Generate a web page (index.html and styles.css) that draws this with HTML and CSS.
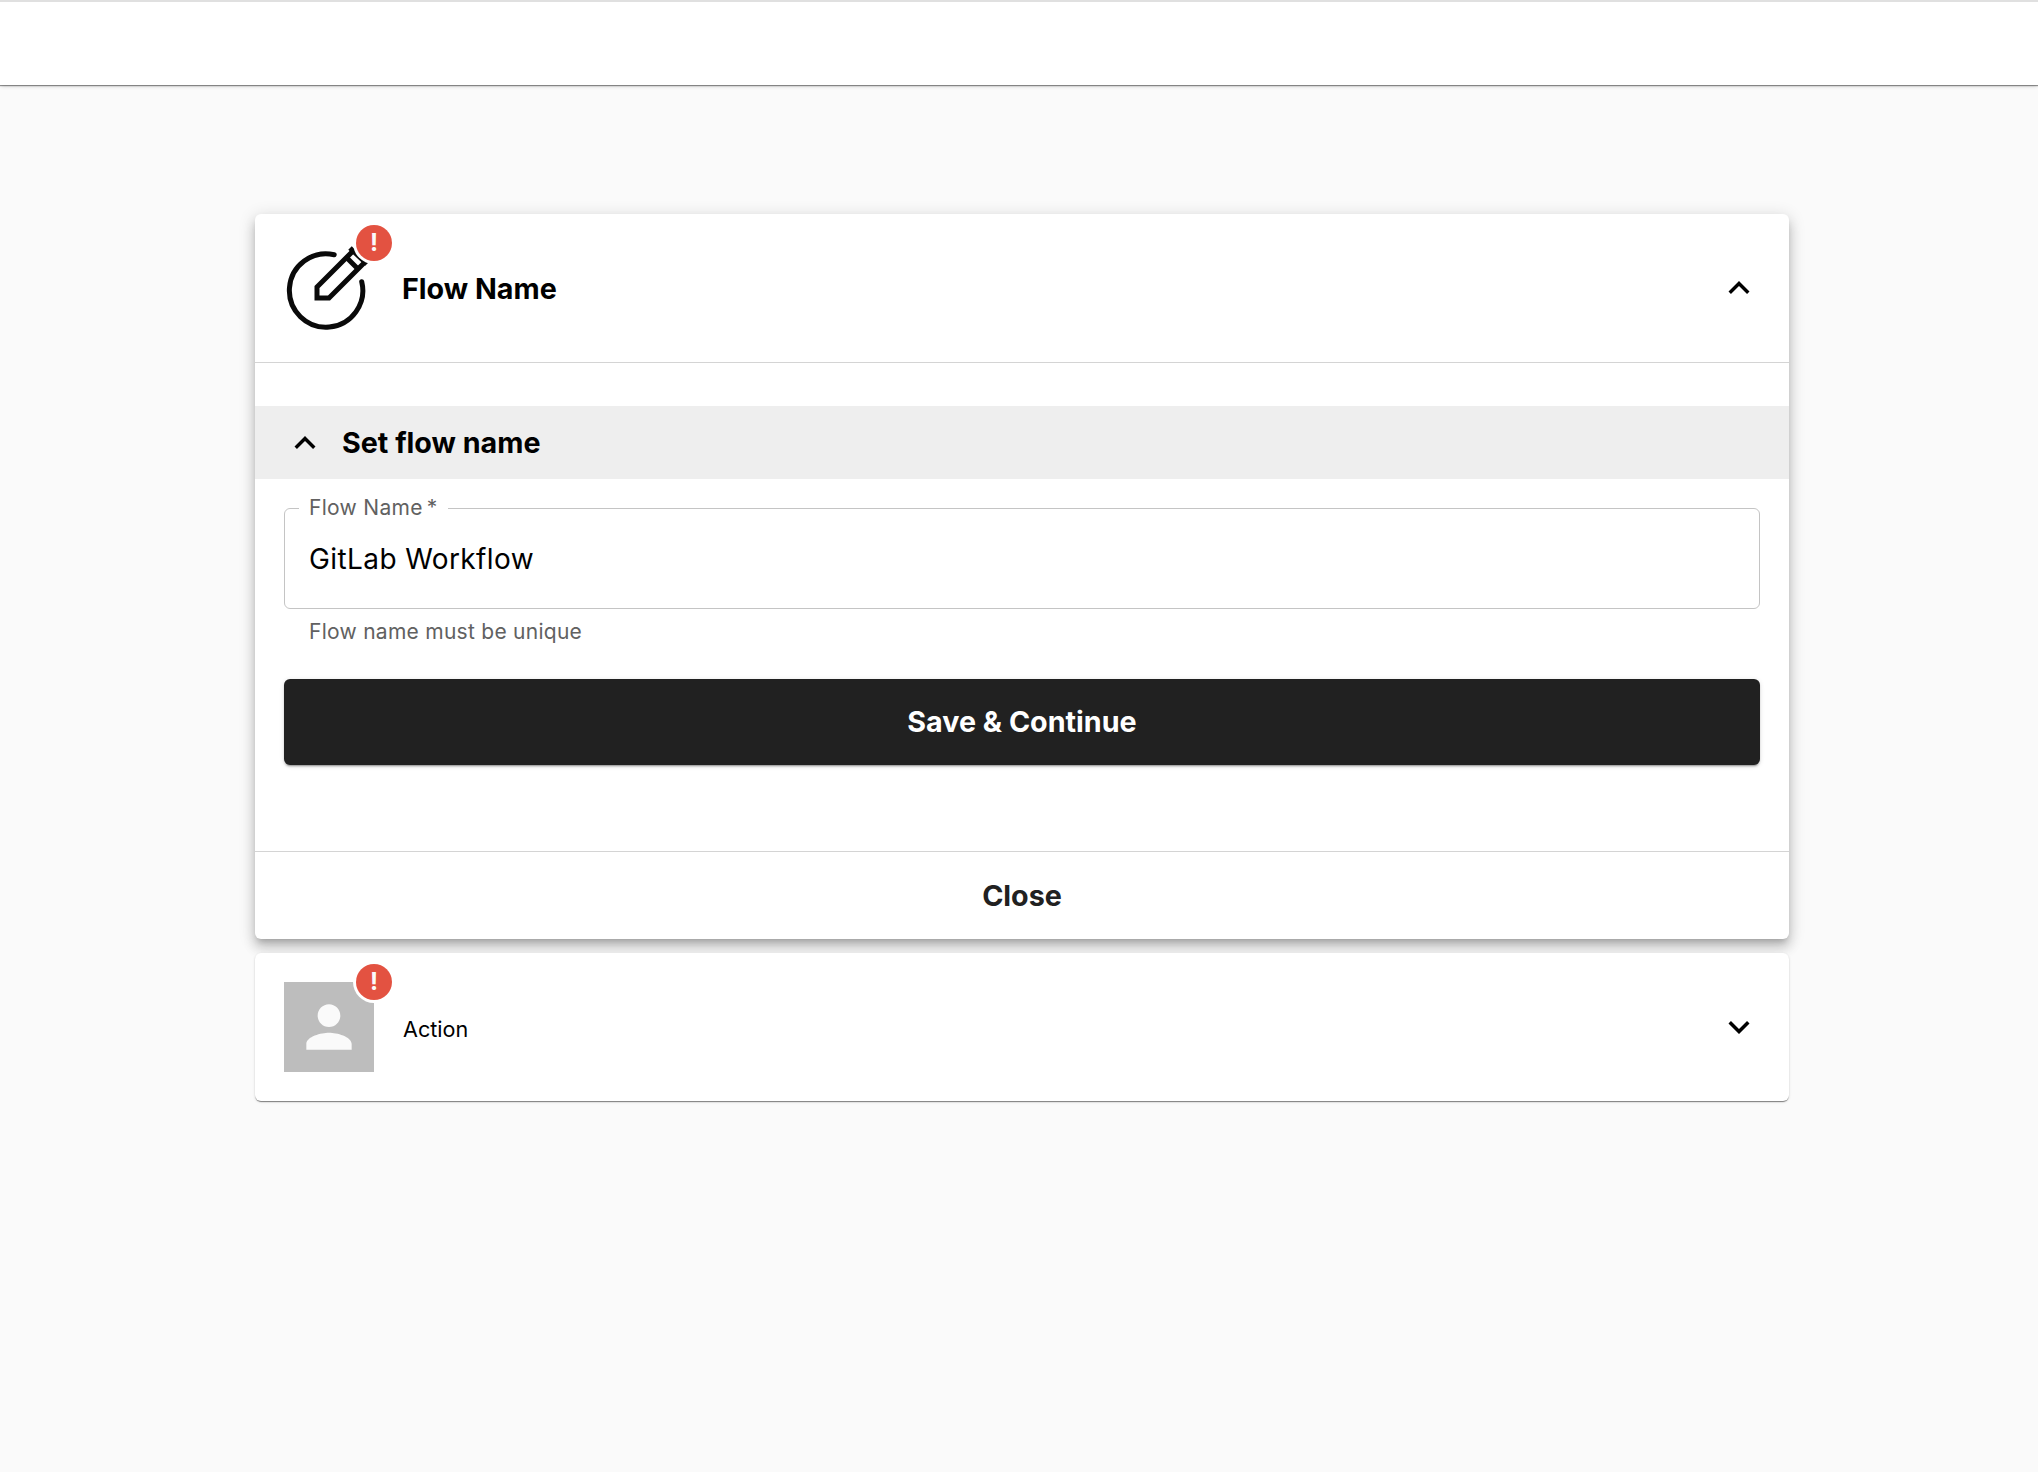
FILE: index.html
```html
<!DOCTYPE html>
<html lang="en">
  <head>
    <meta charset="UTF-8" />
    <title>Flow Editor</title>
    <link rel="stylesheet" href="styles.css">
  </head>
  <body>
    <header class="topbar"></header>
    <main class="content">
      <section class="card card-open">
        <div class="step-head step-head-line">
          <div class="step-icon">
            <svg class="pencil-icon" width="90" height="90" viewBox="0 0 90 90" fill="none" stroke="#0a0a0a">
              <path d="M50.2 11.7A36.7 36.7 0 1 0 77.7 38.7" stroke-width="5" stroke-linecap="round" />
              <path d="M68 9L33 44V55H45L80 20" stroke-width="5" />
              <path d="M63 15L75 27" stroke-width="5" />
              <path d="M66 5L83 21" stroke-width="5" />
            </svg>
            <span class="badge">!</span>
          </div>
          <h2 class="step-title">Flow Name</h2>
          <svg class="chevron" width="42" height="42" viewBox="0 0 24 24"><path d="M7.41 15.41 12 10.83l4.59 4.58L18 14l-6-6-6 6z" /></svg>
        </div>
        <div class="step-body">
          <div class="sub-head">
            <svg class="chevron" width="42" height="42" viewBox="0 0 24 24"><path d="M7.41 15.41 12 10.83l4.59 4.58L18 14l-6-6-6 6z" /></svg>
            <h3 class="sub-title">Set flow name</h3>
          </div>
          <div class="form">
            <fieldset class="field">
              <legend class="field-label">Flow Name<span class="req">*</span></legend>
              <input class="field-input" type="text" value="GitLab Workflow" />
            </fieldset>
            <p class="field-help">Flow name must be unique</p>
            <button class="save-btn">Save &amp; Continue</button>
          </div>
        </div>
        <button class="close-btn">Close</button>
      </section>

      <section class="card">
        <div class="step-head">
          <div class="step-icon">
            <div class="avatar">
              <svg width="68" height="68" viewBox="0 0 24 24" fill="#fafafa"><path d="M12 12c2.21 0 4-1.79 4-4s-1.79-4-4-4-4 1.79-4 4 1.79 4 4 4zm0 2c-2.67 0-8 1.34-8 4v2h16v-2c0-2.66-5.33-4-8-4z" /></svg>
            </div>
            <span class="badge">!</span>
          </div>
          <span class="step-name">Action</span>
          <svg class="chevron" width="42" height="42" viewBox="0 0 24 24"><path d="M7.41 8.59 12 13.17l4.59-4.58L18 10l-6 6-6-6z" /></svg>
        </div>
      </section>
    </main>
  </body>
</html>
```

FILE: styles.css
```css
* {
  box-sizing: border-box;
}
body {
  margin: 0;
  min-height: 100vh;
  background-color: #fafafa;
  font-family: "Inter", "Liberation Sans", sans-serif;
  color: #000;
}
.topbar {
  height: 85px;
  background-color: #fff;
  border-top: 2px solid #e0e0e0;
  box-shadow: 0 2px 4px -1px rgba(0, 0, 0, 0.2), 0 1px 1px rgba(0, 0, 0, 0.4);
}
.content {
  width: 1534px;
  margin-left: 255px;
  padding-top: 129px;
  display: flex;
  flex-direction: column;
  gap: 14px;
}
.card {
  background-color: #fff;
  border-radius: 6px;
  box-shadow: 0 2px 1px -1px rgba(0, 0, 0, 0.3), 0 1px 1px rgba(0, 0, 0, 0.2), 0 1px 3px rgba(0, 0, 0, 0.12);
}
.card-open {
  box-shadow: 0 5px 6px -3px rgba(0, 0, 0, 0.2), 0 9px 12px 1px rgba(0, 0, 0, 0.14), 0 3px 16px 2px rgba(0, 0, 0, 0.12);
}
.step-head {
  height: 148px;
  padding: 0 29px;
  display: flex;
  align-items: center;
}
.step-head-line {
  height: 149px;
  border-bottom: 1px solid #d4d4d4;
}
.step-icon {
  position: relative;
  width: 90px;
  height: 90px;
  flex-shrink: 0;
}
.pencil-icon {
  display: block;
}
.badge {
  position: absolute;
  top: -18px;
  right: -18px;
  width: 36px;
  height: 36px;
  border-radius: 50%;
  background-color: #e35241;
  box-shadow: 0 0 0 3px #fff;
  color: #fafafa;
  font-size: 24px;
  font-weight: 700;
  line-height: 36px;
  text-align: center;
}
.avatar {
  width: 90px;
  height: 90px;
  background-color: #bdbdbd;
  display: flex;
  align-items: center;
  justify-content: center;
}
.step-title {
  margin: 0 0 0 28px;
  flex: 1;
  font-size: 28.7px;
  font-weight: 700;
}
.step-name {
  margin: 4px 0 0 29px;
  flex: 1;
  font-size: 21.6px;
}
.chevron {
  display: block;
  flex-shrink: 0;
}
.step-body {
  padding: 43px 0 0;
}
.sub-head {
  height: 73px;
  padding-left: 29px;
  display: flex;
  align-items: center;
  background-color: #eee;
}
.sub-title {
  margin: 0 0 0 16px;
  font-size: 28.7px;
  font-weight: 700;
}
.form {
  padding: 17px 29px 86px;
}
.field {
  margin: 0;
  padding: 0 24px;
  height: 113px;
  border: 1px solid #c4c4c4;
  border-radius: 6px;
}
.field-label {
  padding: 0 10px;
  margin-left: -10px;
  font-size: 21px;
  letter-spacing: 0.3px;
  line-height: 24px;
  color: #616161;
}
.req {
  margin-left: 4px;
}
.field-input {
  width: 100%;
  margin-top: 22px;
  padding: 0;
  border: none;
  outline: none;
  font-family: inherit;
  font-size: 28px;
  letter-spacing: 0.4px;
  color: #000;
}
.field-help {
  margin: 10px 0 0 25px;
  font-size: 21px;
  letter-spacing: 0.27px;
  color: #616161;
}
.save-btn {
  display: block;
  width: 100%;
  height: 86px;
  margin-top: 35px;
  padding-bottom: 2px;
  border: none;
  border-radius: 6px;
  background-color: #212121;
  box-shadow: 0 3px 1px -2px rgba(0, 0, 0, 0.2), 0 2px 2px rgba(0, 0, 0, 0.14), 0 1px 5px rgba(0, 0, 0, 0.12);
  color: #fff;
  font-family: inherit;
  font-size: 28.7px;
  font-weight: 700;
}
.close-btn {
  display: block;
  width: 100%;
  height: 88px;
  padding-bottom: 2px;
  border: none;
  border-top: 1px solid #d4d4d4;
  border-radius: 0 0 6px 6px;
  background: none;
  color: #212121;
  font-family: inherit;
  font-size: 28.7px;
  font-weight: 700;
}
```
